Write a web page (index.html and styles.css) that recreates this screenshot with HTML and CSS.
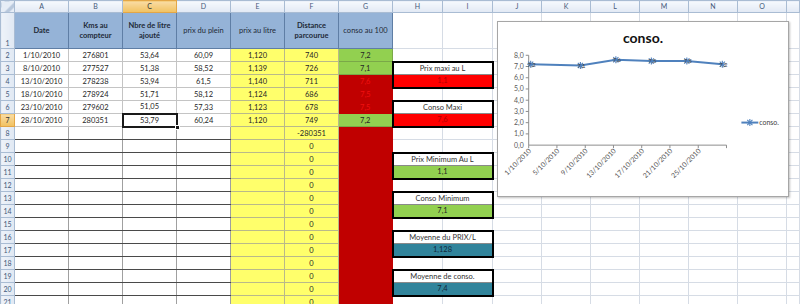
FILE: index.html
```html
<!DOCTYPE html>
<html lang="fr">
<head>
  <meta charset="UTF-8">
  <title>Consommation</title>
  <link rel="stylesheet" href="styles.css">
</head>
<body class="page">
  <table class="sheet">
    <colgroup>
      <col class="col-rh">
      <col class="col-a"><col class="col-a"><col class="col-a"><col class="col-a"><col class="col-a"><col class="col-a"><col class="col-a">
      <col class="col-h"><col class="col-h">
      <col class="col-j"><col class="col-j"><col class="col-j"><col class="col-j"><col class="col-j"><col class="col-j">
      <col>
    </colgroup>
    <tr class="sheet__cols">
      <th class="corner"></th>
      <th>A</th><th>B</th><th class="on">C</th><th>D</th><th>E</th><th>F</th><th>G</th>
      <th>H</th><th>I</th><th>J</th><th>K</th><th>L</th><th>M</th><th>N</th><th>O</th><th></th>
    </tr>
    <tr class="sheet__title">
      <th class="rh rh--bottom">1</th>
      <td class="hd b">Date</td>
      <td class="hd b">Kms au<br>compteur</td>
      <td class="hd b">Nbre de litre<br>ajouté</td>
      <td class="hd">prix du plein</td>
      <td class="hd">prix au litre</td>
      <td class="hd b">Distance<br>parcourue</td>
      <td class="hd">conso au 100</td>
      <td></td><td></td><td></td><td></td><td></td><td></td><td></td><td></td><td></td>
    </tr>
    <tr>
      <th class="rh">2</th>
      <td class="dt">1/10/2010</td><td class="dt">276801</td><td class="dt">53,64</td><td class="dt">60,09</td>
      <td class="y">1,120</td><td class="y">740</td><td class="g">7,2</td>
      <td></td><td></td><td></td><td></td><td></td><td></td><td></td><td></td><td></td>
    </tr>
    <tr>
      <th class="rh">3</th>
      <td class="dt">8/10/2010</td><td class="dt">277527</td><td class="dt">51,38</td><td class="dt">58,52</td>
      <td class="y">1,139</td><td class="y">726</td><td class="g">7,1</td>
      <td class="bx-t" colspan="2">Prix maxi au L</td>
      <td></td><td></td><td></td><td></td><td></td><td></td><td></td>
    </tr>
    <tr>
      <th class="rh">4</th>
      <td class="dt">13/10/2010</td><td class="dt">278238</td><td class="dt">53,94</td><td class="dt">61,5</td>
      <td class="y">1,140</td><td class="y">711</td><td class="dr">7,6</td>
      <td class="bx-b r" colspan="2">1,1</td>
      <td></td><td></td><td></td><td></td><td></td><td></td><td></td>
    </tr>
    <tr>
      <th class="rh">5</th>
      <td class="dt">18/10/2010</td><td class="dt">278924</td><td class="dt">51,71</td><td class="dt">58,12</td>
      <td class="y">1,124</td><td class="y">686</td><td class="dr">7,5</td>
      <td></td><td></td><td></td><td></td><td></td><td></td><td></td><td></td><td></td>
    </tr>
    <tr>
      <th class="rh">6</th>
      <td class="dt">23/10/2010</td><td class="dt">279602</td><td class="dt">51,05</td><td class="dt">57,33</td>
      <td class="y">1,123</td><td class="y">678</td><td class="dr">7,5</td>
      <td class="bx-t" colspan="2">Conso Maxi</td>
      <td></td><td></td><td></td><td></td><td></td><td></td><td></td>
    </tr>
    <tr>
      <th class="rh on">7</th>
      <td class="dt">28/10/2010</td><td class="dt">280351</td><td class="dt sel">53,79</td><td class="dt">60,24</td>
      <td class="y">1,120</td><td class="y">749</td><td class="g">7,2</td>
      <td class="bx-b r" colspan="2">7,6</td>
      <td></td><td></td><td></td><td></td><td></td><td></td><td></td>
    </tr>
    <tr>
      <th class="rh">8</th>
      <td class="ln"></td><td class="ln"></td><td class="ln"></td><td class="ln"></td>
      <td class="y"></td><td class="y">-280351</td><td class="dr"></td>
      <td></td><td></td><td></td><td></td><td></td><td></td><td></td><td></td><td></td>
    </tr>
    <tr>
      <th class="rh">9</th>
      <td class="ln"></td><td class="ln"></td><td class="ln"></td><td class="ln"></td>
      <td class="y"></td><td class="y">0</td><td class="dr"></td>
      <td></td><td></td><td></td><td></td><td></td><td></td><td></td><td></td><td></td>
    </tr>
    <tr>
      <th class="rh">10</th>
      <td class="ln"></td><td class="ln"></td><td class="ln"></td><td class="ln"></td>
      <td class="y"></td><td class="y">0</td><td class="dr"></td>
      <td class="bx-t" colspan="2">Prix Minimum Au L</td>
      <td></td><td></td><td></td><td></td><td></td><td></td><td></td>
    </tr>
    <tr>
      <th class="rh">11</th>
      <td class="ln"></td><td class="ln"></td><td class="ln"></td><td class="ln"></td>
      <td class="y"></td><td class="y">0</td><td class="dr"></td>
      <td class="bx-b g" colspan="2">1,1</td>
      <td></td><td></td><td></td><td></td><td></td><td></td><td></td>
    </tr>
    <tr>
      <th class="rh">12</th>
      <td class="ln"></td><td class="ln"></td><td class="ln"></td><td class="ln"></td>
      <td class="y"></td><td class="y">0</td><td class="dr"></td>
      <td></td><td></td><td></td><td></td><td></td><td></td><td></td><td></td><td></td>
    </tr>
    <tr>
      <th class="rh">13</th>
      <td class="ln"></td><td class="ln"></td><td class="ln"></td><td class="ln"></td>
      <td class="y"></td><td class="y">0</td><td class="dr"></td>
      <td class="bx-t" colspan="2">Conso Minimum</td>
      <td></td><td></td><td></td><td></td><td></td><td></td><td></td>
    </tr>
    <tr>
      <th class="rh">14</th>
      <td class="ln"></td><td class="ln"></td><td class="ln"></td><td class="ln"></td>
      <td class="y"></td><td class="y">0</td><td class="dr"></td>
      <td class="bx-b g" colspan="2">7,1</td>
      <td></td><td></td><td></td><td></td><td></td><td></td><td></td>
    </tr>
    <tr>
      <th class="rh">15</th>
      <td class="ln"></td><td class="ln"></td><td class="ln"></td><td class="ln"></td>
      <td class="y"></td><td class="y">0</td><td class="dr"></td>
      <td></td><td></td><td></td><td></td><td></td><td></td><td></td><td></td><td></td>
    </tr>
    <tr>
      <th class="rh">16</th>
      <td class="ln"></td><td class="ln"></td><td class="ln"></td><td class="ln"></td>
      <td class="y"></td><td class="y">0</td><td class="dr"></td>
      <td class="bx-t" colspan="2">Moyenne du PRIX/L</td>
      <td></td><td></td><td></td><td></td><td></td><td></td><td></td>
    </tr>
    <tr>
      <th class="rh">17</th>
      <td class="ln"></td><td class="ln"></td><td class="ln"></td><td class="ln"></td>
      <td class="y"></td><td class="y">0</td><td class="dr"></td>
      <td class="bx-b t" colspan="2">1,128</td>
      <td></td><td></td><td></td><td></td><td></td><td></td><td></td>
    </tr>
    <tr>
      <th class="rh">18</th>
      <td class="ln"></td><td class="ln"></td><td class="ln"></td><td class="ln"></td>
      <td class="y"></td><td class="y">0</td><td class="dr"></td>
      <td></td><td></td><td></td><td></td><td></td><td></td><td></td><td></td><td></td>
    </tr>
    <tr>
      <th class="rh">19</th>
      <td class="ln"></td><td class="ln"></td><td class="ln"></td><td class="ln"></td>
      <td class="y"></td><td class="y">0</td><td class="dr"></td>
      <td class="bx-t" colspan="2">Moyenne de conso.</td>
      <td></td><td></td><td></td><td></td><td></td><td></td><td></td>
    </tr>
    <tr>
      <th class="rh">20</th>
      <td class="ln"></td><td class="ln"></td><td class="ln"></td><td class="ln"></td>
      <td class="y"></td><td class="y">0</td><td class="dr"></td>
      <td class="bx-b t" colspan="2">7,4</td>
      <td></td><td></td><td></td><td></td><td></td><td></td><td></td>
    </tr>
    <tr>
      <th class="rh">21</th>
      <td class="ln"></td><td class="ln"></td><td class="ln"></td><td class="ln"></td>
      <td class="y"></td><td class="y">0</td><td class="dr"></td>
      <td></td><td></td><td></td><td></td><td></td><td></td><td></td><td></td><td></td>
    </tr>
  </table>

  <div class="chart">
    <div class="chart__title">conso.</div>
    <svg class="chart__plot" width="292" height="145" viewBox="0 30 292 145">
      <defs>
        <g id="star" stroke="#4f81bd" stroke-width="1.1">
          <line x1="-3.5" y1="0" x2="3.5" y2="0"/>
          <line x1="0" y1="-3.5" x2="0" y2="3.5"/>
          <line x1="-2.6" y1="-2.6" x2="2.6" y2="2.6"/>
          <line x1="-2.6" y1="2.6" x2="2.6" y2="-2.6"/>
        </g>
      </defs>
      <g class="axis">
        <line x1="31" y1="33.3" x2="31" y2="123.7"/>
        <line x1="31" y1="123.7" x2="230" y2="123.7"/>
        <line x1="28" y1="33.3" x2="31" y2="33.3"/>
        <line x1="28" y1="44.6" x2="31" y2="44.6"/>
        <line x1="28" y1="55.9" x2="31" y2="55.9"/>
        <line x1="28" y1="67.2" x2="31" y2="67.2"/>
        <line x1="28" y1="78.5" x2="31" y2="78.5"/>
        <line x1="28" y1="89.8" x2="31" y2="89.8"/>
        <line x1="28" y1="101.1" x2="31" y2="101.1"/>
        <line x1="28" y1="112.4" x2="31" y2="112.4"/>
        <line x1="31" y1="123.7" x2="31" y2="126.7"/>
        <line x1="59.4" y1="123.7" x2="59.4" y2="126.7"/>
        <line x1="87.9" y1="123.7" x2="87.9" y2="126.7"/>
        <line x1="116.3" y1="123.7" x2="116.3" y2="126.7"/>
        <line x1="144.7" y1="123.7" x2="144.7" y2="126.7"/>
        <line x1="173.1" y1="123.7" x2="173.1" y2="126.7"/>
        <line x1="201.6" y1="123.7" x2="201.6" y2="126.7"/>
        <line x1="230" y1="123.7" x2="230" y2="126.7"/>
      </g>
      <g class="ylabels">
        <text x="26" y="35.8">8,0</text>
        <text x="26" y="47.1">7,0</text>
        <text x="26" y="58.4">6,0</text>
        <text x="26" y="69.7">5,0</text>
        <text x="26" y="81">4,0</text>
        <text x="26" y="92.3">3,0</text>
        <text x="26" y="103.6">2,0</text>
        <text x="26" y="114.9">1,0</text>
        <text x="26" y="126.2">0,0</text>
      </g>
      <g class="xlabels">
        <text x="34" y="130" transform="rotate(-45 34 130)">1/10/2010</text>
        <text x="62.4" y="130" transform="rotate(-45 62.4 130)">5/10/2010</text>
        <text x="90.9" y="130" transform="rotate(-45 90.9 130)">9/10/2010</text>
        <text x="119.3" y="130" transform="rotate(-45 119.3 130)">13/10/2010</text>
        <text x="147.7" y="130" transform="rotate(-45 147.7 130)">17/10/2010</text>
        <text x="176.1" y="130" transform="rotate(-45 176.1 130)">21/10/2010</text>
        <text x="204.6" y="130" transform="rotate(-45 204.6 130)">25/10/2010</text>
      </g>
      <polyline class="series" points="33,42.3 83,43.5 118.7,37.8 154.4,39 190.1,39 225.8,42.3"/>
      <use href="#star" x="33" y="42.3"/>
      <use href="#star" x="83" y="43.5"/>
      <use href="#star" x="118.7" y="37.8"/>
      <use href="#star" x="154.4" y="39"/>
      <use href="#star" x="190.1" y="39"/>
      <use href="#star" x="225.8" y="42.3"/>
      <g class="dlabels">
        <text x="34" y="44.8">7,2</text>
        <text x="84" y="46">7,1</text>
        <text x="119.7" y="40.3">7,6</text>
        <text x="155.4" y="41.5">7,5</text>
        <text x="191.1" y="41.5">7,5</text>
        <text x="226.8" y="44.8">7,2</text>
      </g>
      <line class="series" x1="245" y1="101" x2="262" y2="101"/>
      <use href="#star" x="253.5" y="101"/>
      <text class="legend" x="263" y="103.5">conso.</text>
    </svg>
  </div>
</body>
</html>
```

FILE: styles.css
```css
*, *::before, *::after {
  box-sizing: border-box;
}

.page {
  margin: 0;
  width: 800px;
  height: 304px;
  overflow: hidden;
  position: relative;
  background: #fff;
  font-family: Lato, "Liberation Sans", sans-serif;
}

/* sheet */

.sheet {
  border-collapse: collapse;
  table-layout: fixed;
  width: 800px;
  font-size: 7.5px;
  color: #262626;
}

.col-rh { width: 14px; }
.col-a { width: 54px; }
.col-h { width: 50px; }
.col-j { width: 49px; }

.sheet tr {
  height: 13px;
}

.sheet td,
.sheet th {
  padding: 0;
  line-height: 9px;
  text-align: center;
  white-space: nowrap;
  overflow: hidden;
  font-weight: normal;
  border: 1px solid #d6dce5;
}

.sheet .sheet__cols {
  height: 12px;
}

.sheet__cols th {
  background: linear-gradient(#f6f9fd, #e1e9f4);
  border-color: #a9bcd3;
  color: #44597a;
  font-size: 7px;
}

.sheet__cols th.corner {
  background: linear-gradient(135deg, #e6edf6 58%, #b8c8dc 58%, #b8c8dc 78%, #e6edf6 78%);
}

.sheet .sheet__title {
  height: 36px;
}

.sheet .rh {
  background: linear-gradient(90deg, #eef3f9, #e0e8f3);
  border-color: #a9bcd3;
  color: #44597a;
  font-size: 7px;
}

.sheet .rh--bottom {
  vertical-align: bottom;
}

.sheet .on {
  background: linear-gradient(#f9dca4, #f1c15f);
  border-color: #e3a646;
  color: #333;
}

.sheet .hd {
  background: #95b3d7;
  border: 1px solid #5f7ea5;
  color: #1e2a38;
  line-height: 10px;
}

.sheet .b {
  font-weight: bold;
}

.sheet .dt {
  border-color: #c4c4c4;
}

.sheet .ln {
  border-right-color: #a0a0a0;
  border-left-color: #a0a0a0;
  border-bottom-color: #4a4a4a;
  border-top-color: #4a4a4a;
}

.sheet .y {
  background: #ffff6b;
  border-color: #b9b98a;
}

.sheet .g {
  background: #92d050;
  border-color: #7aa848;
}

.sheet .dr {
  background: #c00000;
  border-color: #c00000;
  color: #f01010;
}

.sheet .r {
  background: #ff0000;
  color: #b00000;
}

.sheet .t {
  background: #31849b;
  color: #112a3c;
}

.sheet .bx-t {
  background: #fff;
  border: 2px solid #000;
  border-bottom: 1px solid #8a8a8a;
  color: #333;
}

.sheet .bx-b {
  border: 2px solid #000;
  border-top: 1px solid #8a8a8a;
}

.sheet .sel {
  position: relative;
  border: 2px solid #1a1a1a;
  overflow: visible;
}

.sheet .sel::after {
  content: "";
  position: absolute;
  right: -4px;
  bottom: -4px;
  width: 5px;
  height: 5px;
  background: #1a1a1a;
  border: 1px solid #fff;
}

/* chart */

.chart {
  position: absolute;
  left: 497px;
  top: 21px;
  width: 292px;
  height: 176px;
  background: #fff;
  border: 1px solid #a6a6a6;
  box-shadow: 1px 1px 2px rgba(0, 0, 0, 0.25);
  display: flex;
  flex-direction: column;
}

.chart__title {
  height: 30px;
  padding-top: 8px;
  text-align: center;
  font-size: 14px;
  font-weight: bold;
  color: #111;
  line-height: 16px;
}

.chart__plot {
  display: block;
  margin-left: -1px;
}

.chart__plot .axis line {
  stroke: #8c8c8c;
  stroke-width: 1;
}

.chart__plot text {
  font-family: Lato, "Liberation Sans", sans-serif;
  fill: #595959;
}

.chart__plot .ylabels text {
  font-size: 7px;
  text-anchor: end;
}

.chart__plot .xlabels text {
  font-size: 7px;
  text-anchor: end;
}

.chart__plot .dlabels text {
  font-size: 6px;
  text-anchor: middle;
  fill: #404040;
}

.chart__plot .series {
  fill: none;
  stroke: #4f81bd;
  stroke-width: 2;
}

.chart__plot .legend {
  font-size: 7px;
  fill: #404040;
}
```
